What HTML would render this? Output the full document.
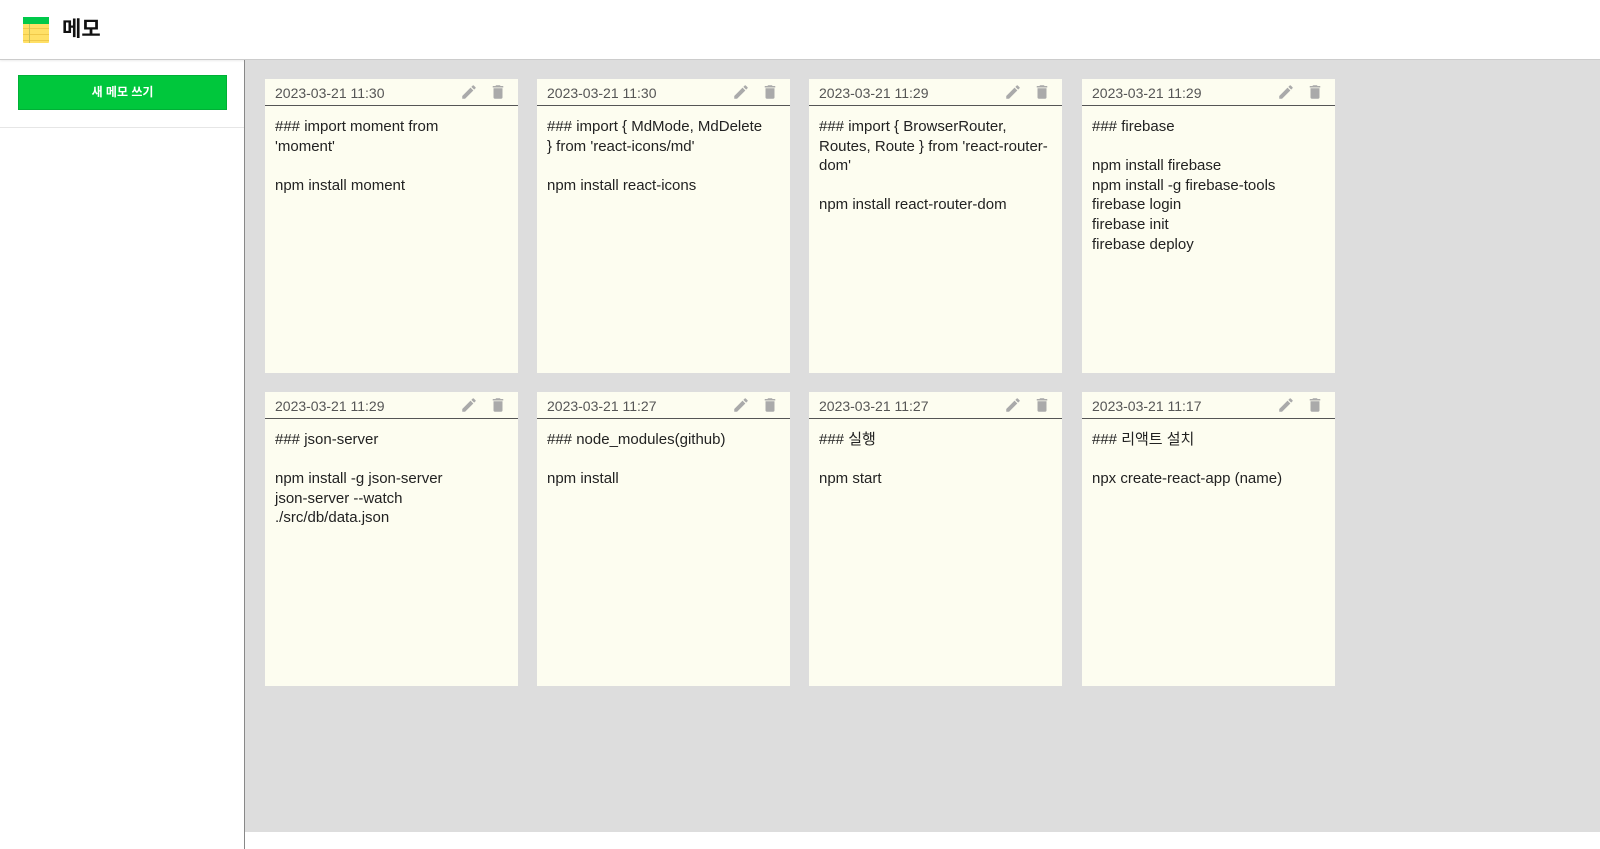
<!DOCTYPE html>
<html><head><meta charset="utf-8"><style>
*{box-sizing:border-box;margin:0;padding:0}
body{width:1600px;height:849px;background:#fff;font-family:"Liberation Sans","Noto Sans CJK KR",sans-serif;position:relative;overflow:hidden}
.hdr{position:absolute;left:0;top:0;width:1600px;height:60px;border-bottom:1px solid #ccc;box-shadow:0 1px 2px rgba(0,0,0,.08)}
.logo{position:absolute;left:23px;top:17px;width:26px;height:26px;background:repeating-linear-gradient(#ffe066 0 5px,#f0c94a 5px 6px);border-radius:1px}
.logo:before{content:"";position:absolute;left:0;top:0;width:26px;height:7px;background:#00c94a}
.logo:after{content:"";position:absolute;left:6px;top:7px;width:1px;height:19px;background:#c9c05a}
.title{position:absolute;left:62px;top:13px;font-size:21px;font-weight:bold;color:#111}
.side{position:absolute;left:0;top:60px;width:245px;height:789px;border-right:1px solid #888}
.btn{position:absolute;left:18px;top:75px;width:209px;height:35px;background:#00c73c;border:1px solid #00b036;color:#fff;font-size:12px;font-weight:bold;text-align:center;line-height:33px}
.sep{position:absolute;left:0;top:127px;width:244px;height:1px;background:#e6e6e6}
.main{position:absolute;left:245px;top:60px;width:1355px;height:772px;background:#dddddd}
.card{position:absolute;width:253px;height:294px;background:#fdfdf0;overflow:hidden}
.ch{height:27px;border-bottom:1px solid #555;font-size:14px;color:#555;padding:6px 0 0 10px;position:relative}
.ic{position:absolute;top:4px}
.cb{padding:11px 10px;font-size:15px;line-height:19.6px;color:#222;white-space:pre}
</style></head><body>
<div class="hdr"><div class="logo"></div><div class="title">메모</div></div>
<div class="side"></div><div class="btn">새 메모 쓰기</div><div class="sep"></div>
<div class="main"></div>
<div class="card" style="left:265px;top:79px"><div class="ch">2023-03-21 11:30<svg class="ic" style="left:195px" width="18" height="18" viewBox="0 0 24 24"><path fill="#aaa" d="M3 17.25V21h3.75L17.8 9.94l-3.75-3.75zM20.7 7.04a1 1 0 000-1.41l-2.340-2.34a1 1 0 00-1.41 0l-1.83 1.83 3.75 3.75z"/></svg><svg class="ic" style="left:224px" width="18" height="18" viewBox="0 0 24 24"><path fill="#aaa" d="M6 19a2 2 0 002 2h8a2 2 0 002-2V7H6zM19 4h-3.5l-1-1h-5l-1 1H5v2h14z"/></svg></div><div class="cb">### import moment from
'moment'

npm install moment</div></div>
<div class="card" style="left:537px;top:79px"><div class="ch">2023-03-21 11:30<svg class="ic" style="left:195px" width="18" height="18" viewBox="0 0 24 24"><path fill="#aaa" d="M3 17.25V21h3.75L17.8 9.94l-3.75-3.75zM20.7 7.04a1 1 0 000-1.41l-2.34-2.34a1 1 0 00-1.41 0l-1.83 1.83 3.75 3.75z"/></svg><svg class="ic" style="left:224px" width="18" height="18" viewBox="0 0 24 24"><path fill="#aaa" d="M6 19a2 2 0 002 2h8a2 2 0 002-2V7H6zM19 4h-3.5l-1-1h-5l-1 1H5v2h14z"/></svg></div><div class="cb">### import { MdMode, MdDelete
} from 'react-icons/md'

npm install react-icons</div></div>
<div class="card" style="left:809px;top:79px"><div class="ch">2023-03-21 11:29<svg class="ic" style="left:195px" width="18" height="18" viewBox="0 0 24 24"><path fill="#aaa" d="M3 17.25V21h3.75L17.8 9.94l-3.75-3.75zM20.7 7.04a1 1 0 000-1.41l-2.34-2.34a1 1 0 00-1.41 0l-1.83 1.83 3.75 3.75z"/></svg><svg class="ic" style="left:224px" width="18" height="18" viewBox="0 0 24 24"><path fill="#aaa" d="M6 19a2 2 0 002 2h8a2 2 0 002-2V7H6zM19 4h-3.5l-1-1h-5l-1 1H5v2h14z"/></svg></div><div class="cb">### import { BrowserRouter,
Routes, Route } from 'react-router-
dom'

npm install react-router-dom</div></div>
<div class="card" style="left:1082px;top:79px"><div class="ch">2023-03-21 11:29<svg class="ic" style="left:195px" width="18" height="18" viewBox="0 0 24 24"><path fill="#aaa" d="M3 17.25V21h3.75L17.8 9.94l-3.75-3.75zM20.7 7.04a1 1 0 000-1.41l-2.34-2.34a1 1 0 00-1.41 0l-1.83 1.83 3.75 3.75z"/></svg><svg class="ic" style="left:224px" width="18" height="18" viewBox="0 0 24 24"><path fill="#aaa" d="M6 19a2 2 0 002 2h8a2 2 0 002-2V7H6zM19 4h-3.5l-1-1h-5l-1 1H5v2h14z"/></svg></div><div class="cb">### firebase

npm install firebase
npm install -g firebase-tools
firebase login
firebase init
firebase deploy</div></div>
<div class="card" style="left:265px;top:392px"><div class="ch">2023-03-21 11:29<svg class="ic" style="left:195px" width="18" height="18" viewBox="0 0 24 24"><path fill="#aaa" d="M3 17.25V21h3.75L17.8 9.94l-3.75-3.75zM20.7 7.04a1 1 0 000-1.41l-2.34-2.34a1 1 0 00-1.41 0l-1.83 1.83 3.75 3.75z"/></svg><svg class="ic" style="left:224px" width="18" height="18" viewBox="0 0 24 24"><path fill="#aaa" d="M6 19a2 2 0 002 2h8a2 2 0 002-2V7H6zM19 4h-3.5l-1-1h-5l-1 1H5v2h14z"/></svg></div><div class="cb">### json-server

npm install -g json-server
json-server --watch
./src/db/data.json</div></div>
<div class="card" style="left:537px;top:392px"><div class="ch">2023-03-21 11:27<svg class="ic" style="left:195px" width="18" height="18" viewBox="0 0 24 24"><path fill="#aaa" d="M3 17.25V21h3.75L17.8 9.94l-3.75-3.75zM20.7 7.04a1 1 0 000-1.41l-2.34-2.34a1 1 0 00-1.41 0l-1.83 1.83 3.75 3.75z"/></svg><svg class="ic" style="left:224px" width="18" height="18" viewBox="0 0 24 24"><path fill="#aaa" d="M6 19a2 2 0 002 2h8a2 2 0 002-2V7H6zM19 4h-3.5l-1-1h-5l-1 1H5v2h14z"/></svg></div><div class="cb">### node_modules(github)

npm install</div></div>
<div class="card" style="left:809px;top:392px"><div class="ch">2023-03-21 11:27<svg class="ic" style="left:195px" width="18" height="18" viewBox="0 0 24 24"><path fill="#aaa" d="M3 17.25V21h3.75L17.8 9.94l-3.75-3.75zM20.7 7.04a1 1 0 000-1.41l-2.34-2.34a1 1 0 00-1.41 0l-1.83 1.83 3.75 3.75z"/></svg><svg class="ic" style="left:224px" width="18" height="18" viewBox="0 0 24 24"><path fill="#aaa" d="M6 19a2 2 0 002 2h8a2 2 0 002-2V7H6zM19 4h-3.5l-1-1h-5l-1 1H5v2h14z"/></svg></div><div class="cb">### 실행

npm start</div></div>
<div class="card" style="left:1082px;top:392px"><div class="ch">2023-03-21 11:17<svg class="ic" style="left:195px" width="18" height="18" viewBox="0 0 24 24"><path fill="#aaa" d="M3 17.25V21h3.75L17.8 9.94l-3.75-3.75zM20.7 7.04a1 1 0 000-1.41l-2.34-2.34a1 1 0 00-1.41 0l-1.83 1.83 3.75 3.75z"/></svg><svg class="ic" style="left:224px" width="18" height="18" viewBox="0 0 24 24"><path fill="#aaa" d="M6 19a2 2 0 002 2h8a2 2 0 002-2V7H6zM19 4h-3.5l-1-1h-5l-1 1H5v2h14z"/></svg></div><div class="cb">### 리액트 설치

npx create-react-app (name)</div></div>
</body></html>
